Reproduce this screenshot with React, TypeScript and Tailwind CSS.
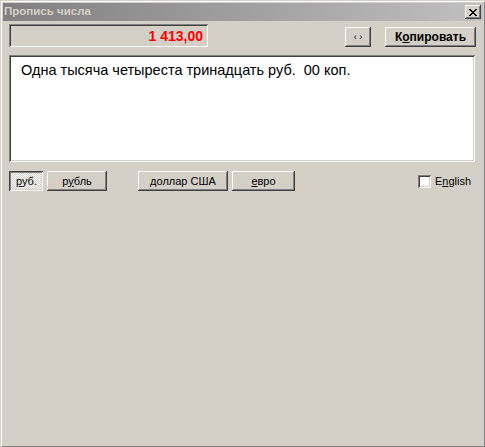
import React from "react";

const raised =
  "shadow-[inset_-1px_-1px_#404040,inset_1px_1px_#ffffff,inset_-2px_-2px_#808080,inset_2px_2px_#d4d0c8]";
const sunken =
  "shadow-[inset_1px_1px_#808080,inset_-1px_-1px_#ffffff,inset_2px_2px_#404040,inset_-2px_-2px_#d4d0c8]";

const Btn = ({
  children,
  className = "",
}: {
  children: React.ReactNode;
  className?: string;
}) => (
  <div
    className={`flex h-[20px] items-center justify-center bg-[#d4d0c8] text-[11px] text-black ${raised} ${className}`}
  >
    {children}
  </div>
);

const App = () => {
  return (
    <div className="w-[485px] h-[447px] border-t border-l border-[#d4d0c8] border-r-[#404040] border-b-[#404040] bg-[#d4d0c8] font-['Liberation_Sans',Arial,sans-serif]">
      <div className="h-full border border-t-white border-l-white border-r-[#808080] border-b-[#808080] p-px flex flex-col">
        {/* title bar */}
        <div className="h-[18px] flex items-center justify-between bg-gradient-to-r from-[#808080] to-[#c0c0c0] pl-px pr-[2px]">
          <span className="text-[11.5px] font-bold text-[#d4d0c8] leading-none">
            Пропись числа
          </span>
          <div
            className={`w-[16px] h-[14px] flex items-center justify-center bg-[#d4d0c8] ${raised}`}
          >
            <svg width="8" height="7" viewBox="0 0 8 7" shapeRendering="crispEdges">
              <path
                d="M0 0h2v1h-2zM6 0h2v1h-2zM1 1h2v1h-2zM5 1h2v1h-2zM2 2h4v1h-4zM3 3h2v1h-2zM2 4h4v1h-4zM1 5h2v1h-2zM5 5h2v1h-2zM0 6h2v1h-2zM6 6h2v1h-2z"
                fill="#000"
              />
            </svg>
          </div>
        </div>

        <div className="flex-1 flex flex-col pl-[6px] pr-[7px]">
          {/* number row */}
          <div className="mt-[3px] flex items-end">
            <div
              className={`w-[199px] h-[23px] flex items-center justify-end pr-[5px] ${sunken}`}
            >
              <span className="text-[14px] font-bold text-[#ff0000] leading-none">
                1 413,00
              </span>
            </div>
            <div className="flex-1" />
            <Btn className="w-[26px]">
              <span className="text-[9px] leading-none">‹ ›</span>
            </Btn>
            <Btn className="w-[91px] ml-[14px] font-bold">
              <span className="text-[12px]">
                К<span className="underline">о</span>пировать
              </span>
            </Btn>
          </div>

          {/* text area */}
          <div
            className={`mt-[8px] mr-[1px] h-[107px] bg-white pl-[12px] pt-[6px] ${sunken}`}
          >
            <p className="text-[14.5px] text-black leading-[18px]">
              Одна тысяча четыреста тринадцать руб.&nbsp;&nbsp;00 коп.
            </p>
          </div>

          {/* currency row */}
          <div className="mt-[9px] flex items-center">
            <div
              className={`w-[34px] h-[20px] flex items-center justify-center text-[11px] text-black bg-[repeating-conic-gradient(#ffffff_0%_25%,#d4d0c8_0%_50%)] bg-[length:2px_2px] shadow-[inset_1px_1px_#404040,inset_-1px_-1px_#ffffff,inset_2px_2px_#808080,inset_-2px_-2px_#d4d0c8]`}
            >
              <span className="pt-px pl-px">
                <span className="underline">р</span>уб.
              </span>
            </div>
            <Btn className="w-[60px] ml-[4px]">
              р<span className="underline">у</span>бль
            </Btn>
            <Btn className="w-[90px] ml-[31px]">
              <span className="underline">д</span>оллар США
            </Btn>
            <Btn className="w-[63px] ml-[4px]">
              <span className="underline">е</span>вро
            </Btn>
            <div className="flex-1" />
            <div className="flex items-center mr-[5px]">
              <div className={`w-[13px] h-[13px] bg-white ${sunken}`} />
              <span className="ml-[4px] text-[11px] text-black">
                E<span className="underline">n</span>glish
              </span>
            </div>
          </div>
        </div>
      </div>
    </div>
  );
};

export default App;
